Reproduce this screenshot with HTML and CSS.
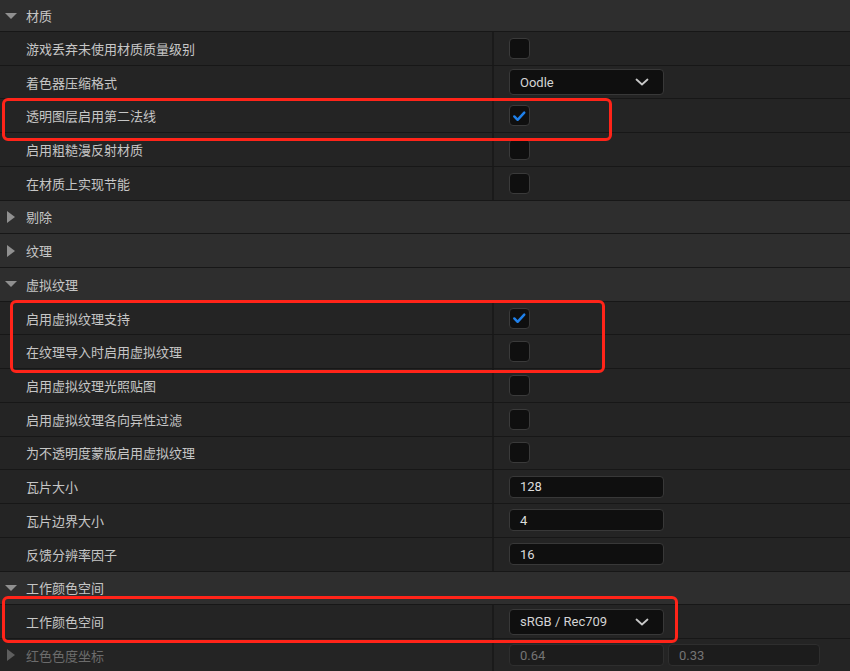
FILE: index.html
```html
<!DOCTYPE html>
<html lang="zh-CN">
<head>
<meta charset="utf-8">
<title>Details</title>
<link rel="stylesheet" href="styles.css">
</head>
<body>
<div class="panel">
  <div class="row hdr first"><span class="tw"><svg width="14" height="8" viewBox="0 0 14 8"><path d="M1 1 L13 1 L7 7 Z" class="tri"/></svg></span><span class="lbl">材质</span></div>
  <div class="row item"><div class="name">游戏丢弃未使用材质质量级别</div><div class="val"><span class="cb"></span></div></div>
  <div class="row item"><div class="name">着色器压缩格式</div><div class="val"><div class="dd"><span>Oodle</span><svg width="14" height="8" viewBox="0 0 14 8"><path d="M1.5 1.5 L7 6.5 L12.5 1.5" class="chev"/></svg></div></div></div>
  <div class="row item"><div class="name">透明图层启用第二法线</div><div class="val"><span class="cb"><svg width="20" height="20" viewBox="0 0 20 20"><path d="M4.5 10.5 L8 14 L15 6.5" class="chk"/></svg></span></div></div>
  <div class="row item"><div class="name">启用粗糙漫反射材质</div><div class="val"><span class="cb"></span></div></div>
  <div class="row item"><div class="name">在材质上实现节能</div><div class="val"><span class="cb"></span></div></div>
  <div class="row hdr"><span class="tw"><svg width="10" height="14" viewBox="0 0 10 14"><path d="M1 1 L9 7 L1 13 Z" class="tri"/></svg></span><span class="lbl">剔除</span></div>
  <div class="row hdr"><span class="tw"><svg width="10" height="14" viewBox="0 0 10 14"><path d="M1 1 L9 7 L1 13 Z" class="tri"/></svg></span><span class="lbl">纹理</span></div>
  <div class="row hdr"><span class="tw"><svg width="14" height="8" viewBox="0 0 14 8"><path d="M1 1 L13 1 L7 7 Z" class="tri"/></svg></span><span class="lbl">虚拟纹理</span></div>
  <div class="row item"><div class="name">启用虚拟纹理支持</div><div class="val"><span class="cb"><svg width="20" height="20" viewBox="0 0 20 20"><path d="M4.5 10.5 L8 14 L15 6.5" class="chk"/></svg></span></div></div>
  <div class="row item"><div class="name">在纹理导入时启用虚拟纹理</div><div class="val"><span class="cb"></span></div></div>
  <div class="row item"><div class="name">启用虚拟纹理光照贴图</div><div class="val"><span class="cb"></span></div></div>
  <div class="row item"><div class="name">启用虚拟纹理各向异性过滤</div><div class="val"><span class="cb"></span></div></div>
  <div class="row item"><div class="name">为不透明度蒙版启用虚拟纹理</div><div class="val"><span class="cb"></span></div></div>
  <div class="row item"><div class="name">瓦片大小</div><div class="val"><div class="num">128</div></div></div>
  <div class="row item"><div class="name">瓦片边界大小</div><div class="val"><div class="num">4</div></div></div>
  <div class="row item"><div class="name">反馈分辨率因子</div><div class="val"><div class="num">16</div></div></div>
  <div class="row hdr"><span class="tw"><svg width="14" height="8" viewBox="0 0 14 8"><path d="M1 1 L13 1 L7 7 Z" class="tri"/></svg></span><span class="lbl">工作颜色空间</span></div>
  <div class="row item"><div class="name">工作颜色空间</div><div class="val"><div class="dd"><span>sRGB / Rec709</span><svg width="14" height="8" viewBox="0 0 14 8"><path d="M1.5 1.5 L7 6.5 L12.5 1.5" class="chev"/></svg></div></div></div>
  <div class="row item dim"><div class="name sub"><span class="tw"><svg width="10" height="14" viewBox="0 0 10 14"><path d="M1 1 L9 7 L1 13 Z" class="tri"/></svg></span>红色色度坐标</div><div class="val pair"><div class="num n1">0.64</div><div class="num n2">0.33</div></div></div>

  <div class="mark m1"></div>
  <div class="mark m2"></div>
  <div class="mark m3"></div>
</div>
</body>
</html>
```

FILE: styles.css
```css
html, body {
  margin: 0;
  padding: 0;
  background: #242424;
  overflow: hidden;
}
.panel {
  position: relative;
  width: 850px;
  height: 671px;
  overflow: hidden;
  font-family: "Noto Sans CJK SC", "Noto Sans", sans-serif;
  font-size: 13px;
  color: #c6c6c6;
}
.row {
  box-sizing: border-box;
  height: 33.72px;
  border-top: 1px solid #171717;
  display: flex;
  align-items: stretch;
  background: #242424;
}
.row.first {
  height: 31px;
  border-top: none;
}
.hdr {
  background: #2e2e2e;
  align-items: center;
}
.tw {
  width: 22px;
  margin-right: 4px;
  display: flex;
  justify-content: center;
  align-items: center;
}
.tri {
  fill: #909090;
}
.lbl {
  line-height: 1;
}
.name {
  box-sizing: border-box;
  width: 494px;
  padding-left: 26px;
  border-right: 2px solid #1a1a1a;
  display: flex;
  align-items: center;
}
.val {
  flex: 1;
  padding-left: 15px;
  display: flex;
  align-items: center;
  gap: 4px;
}
.cb {
  box-sizing: border-box;
  width: 21px;
  height: 21px;
  border: 1px solid #3a3a3a;
  border-radius: 4px;
  background: #0f0f0f;
  display: flex;
  align-items: center;
  justify-content: center;
}
.cb svg {
  display: block;
}
.chk {
  fill: none;
  stroke: #1f80ea;
  stroke-width: 2.6;
  stroke-linecap: round;
  stroke-linejoin: round;
}
.dd {
  box-sizing: border-box;
  width: 155px;
  height: 26px;
  border: 1px solid #383838;
  border-radius: 4px;
  background: #0f0f0f;
  display: flex;
  align-items: center;
  justify-content: space-between;
  padding: 0 14px 0 10px;
  font-family: Roboto, "Noto Sans", sans-serif;
  color: #d4d4d4;
}
.chev {
  fill: none;
  stroke: #c8c8c8;
  stroke-width: 1.8;
  stroke-linecap: round;
  stroke-linejoin: round;
}
.num {
  box-sizing: border-box;
  width: 155px;
  height: 22px;
  border: 1px solid #383838;
  border-radius: 4px;
  background: #0f0f0f;
  display: flex;
  align-items: center;
  padding-left: 10px;
  font-family: Roboto, "Noto Sans", sans-serif;
  color: #dcdcdc;
}
.pair .num {
  background: #1c1c1c;
  border-color: #2e2e2e;
  color: #747474;
}
.pair .n1 {
  width: 155px;
}
.pair .n2 {
  width: 152px;
}
.dim .name {
  color: #6c6c6c;
}
.name.sub {
  padding-left: 0;
}
.dim .tri {
  fill: #5e5e5e;
}
.mark {
  position: absolute;
  box-sizing: border-box;
  border: 3px solid #ff2419;
  border-radius: 6px;
  pointer-events: none;
}
.m1 {
  left: 2px;
  top: 98px;
  width: 610px;
  height: 43px;
}
.m2 {
  left: 10px;
  top: 300px;
  width: 595px;
  height: 73px;
}
.m3 {
  left: 2px;
  top: 596px;
  width: 676px;
  height: 47px;
}
```
